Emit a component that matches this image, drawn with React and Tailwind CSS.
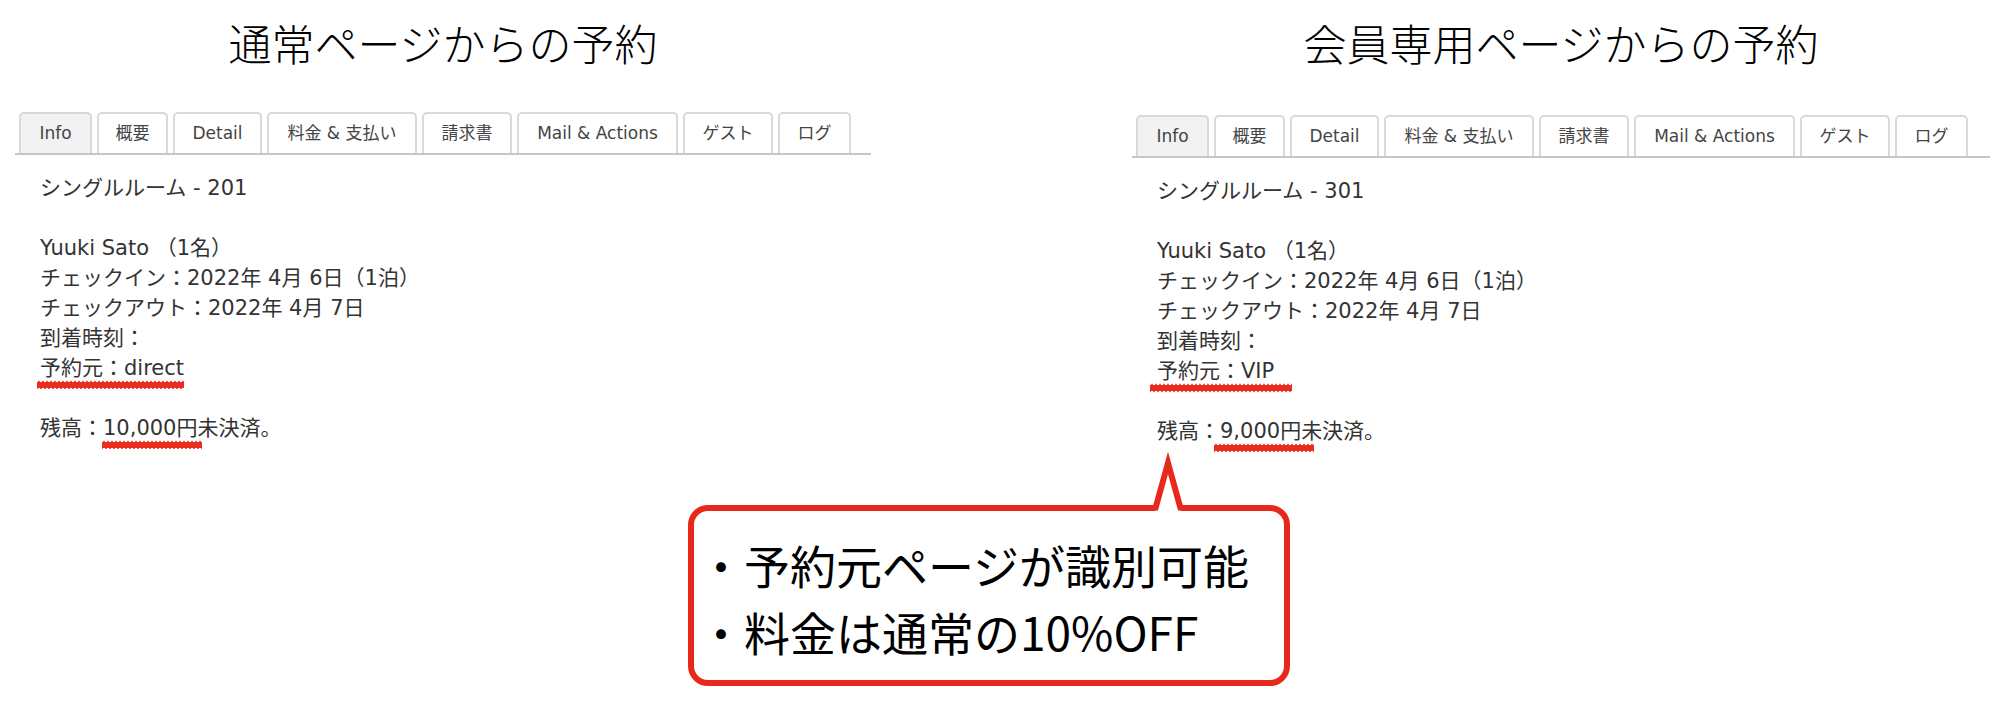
import { useId } from "react";

// ─── Data ─────────────────────────────────────────────────────────────────────
const TABS = [
  { label: "Info", w: "w-[73px]", active: true },
  { label: "概要", w: "w-[71px]" },
  { label: "Detail", w: "w-[89px]" },
  { label: "料金 & 支払い", w: "w-[150px]" },
  { label: "請求書", w: "w-[90px]" },
  { label: "Mail & Actions", w: "w-[161px]" },
  { label: "ゲスト", w: "w-[90px]" },
  { label: "ログ", w: "w-[73px]" },
];

const RED = "#e8281a";

// ─── Red marker scribble ──────────────────────────────────────────────────────
function Scribble() {
  const id = useId().replace(/:/g, "");
  return (
    <svg className="absolute inset-0 h-full w-full" aria-hidden="true">
      <defs>
        <pattern id={`zz${id}`} width="4" height="10" patternUnits="userSpaceOnUse">
          <path d="M0 9 L2 1 L4 9" stroke={RED} strokeWidth="1.6" fill="none" />
        </pattern>
      </defs>
      <rect x="0" y="2" width="100%" height="6" fill={RED} opacity="0.95" />
      <rect x="0" y="0" width="100%" height="10" fill={`url(#zz${id})`} opacity="0.8" />
    </svg>
  );
}

function Marked({ children, pos }) {
  return (
    <span className="relative inline-block">
      {children}
      <span className={`absolute top-[27px] h-[10px] ${pos}`}>
        <Scribble />
      </span>
    </span>
  );
}

// ─── Tab strip ────────────────────────────────────────────────────────────────
function TabStrip() {
  return (
    <div>
      <div className="flex gap-[5px] pl-[4px]">
        {TABS.map((t) => (
          <div
            key={t.label}
            className={`${t.w} h-[41px] flex items-center justify-center rounded-t-[5px] border-2 border-b-0 border-[#d9d9d9] text-[17px] text-[#444] ${
              t.active ? "bg-[#f2f2f2]" : "bg-white"
            }`}
          >
            {t.label}
          </div>
        ))}
      </div>
      <div className="h-[2px] bg-[#c6c6c6]" />
    </div>
  );
}

// ─── Booking panel ────────────────────────────────────────────────────────────
function Panel({ title, room, source, sourcePos, balance, balancePos, shift }) {
  return (
    <div className="flex flex-col">
      <h2 className="pt-[16px] text-center font-['Noto_Sans_CJK_JP'] text-[43px] leading-[52px] font-light text-black">
        {title}
      </h2>
      <div className={shift}>
        <TabStrip />
        <div className="pt-[18px] pl-[25px] text-[21px] leading-[30px] text-[#333]">
          <div>シングルルーム - {room}</div>
          <div className="h-[30px]" />
          <div>Yuuki Sato （1名）</div>
          <div>チェックイン：2022年 4月 6日（1泊）</div>
          <div>チェックアウト：2022年 4月 7日</div>
          <div>到着時刻：</div>
          <div>
            <Marked pos={sourcePos}>予約元：{source}</Marked>
          </div>
          <div className="h-[30px]" />
          <div>
            残高：<Marked pos={balancePos}>{balance}円</Marked>未決済。
          </div>
        </div>
      </div>
    </div>
  );
}

// ─── Callout bubble ───────────────────────────────────────────────────────────
function Callout() {
  return (
    <div className="relative ml-[688px] h-[181px] w-[602px] rounded-[20px] border-[6px] border-[#e8281a] bg-white pt-[20px] pl-[4px] font-['Noto_Sans_CJK_JP'] text-[46px] leading-[67px] text-black">
      <svg
        className="absolute left-[449px] top-[-56px] h-[58px] w-[50px] overflow-visible"
        viewBox="0 0 50 58"
        aria-hidden="true"
      >
        <polygon points="12,58 25,6 38,58" fill="white" />
        <path d="M12 55 L25 8 L38 55" stroke={RED} strokeWidth="6" fill="none" strokeLinejoin="miter" />
      </svg>
      <div>・予約元ページが識別可能</div>
      <div>・料金は通常の10%OFF</div>
    </div>
  );
}

// ─── Main export ──────────────────────────────────────────────────────────────
export default function App() {
  return (
    <div
      className="min-h-[709px] w-[1999px] overflow-hidden bg-white"
      style={{ fontFamily: '"DejaVu Sans", "Noto Sans CJK JP", sans-serif' }}
    >
      <div className="flex pl-[15px]">
        <div className="w-[856px]">
          <Panel
            title="通常ページからの予約"
            room="201"
            source="direct"
            sourcePos="left-[-3px] right-[0px]"
            balance="10,000"
            balancePos="left-[-1px] right-[-5px]"
            shift="mt-[44px]"
          />
        </div>
        <div className="ml-[261px] w-[858px]">
          <Panel
            title="会員専用ページからの予約"
            room="301"
            source="VIP"
            sourcePos="left-[-7px] right-[-18px]"
            balance="9,000"
            balancePos="left-[-6px] right-[-13px]"
            shift="mt-[47px]"
          />
        </div>
      </div>
      <div className="mt-[59px]">
        <Callout />
      </div>
    </div>
  );
}
